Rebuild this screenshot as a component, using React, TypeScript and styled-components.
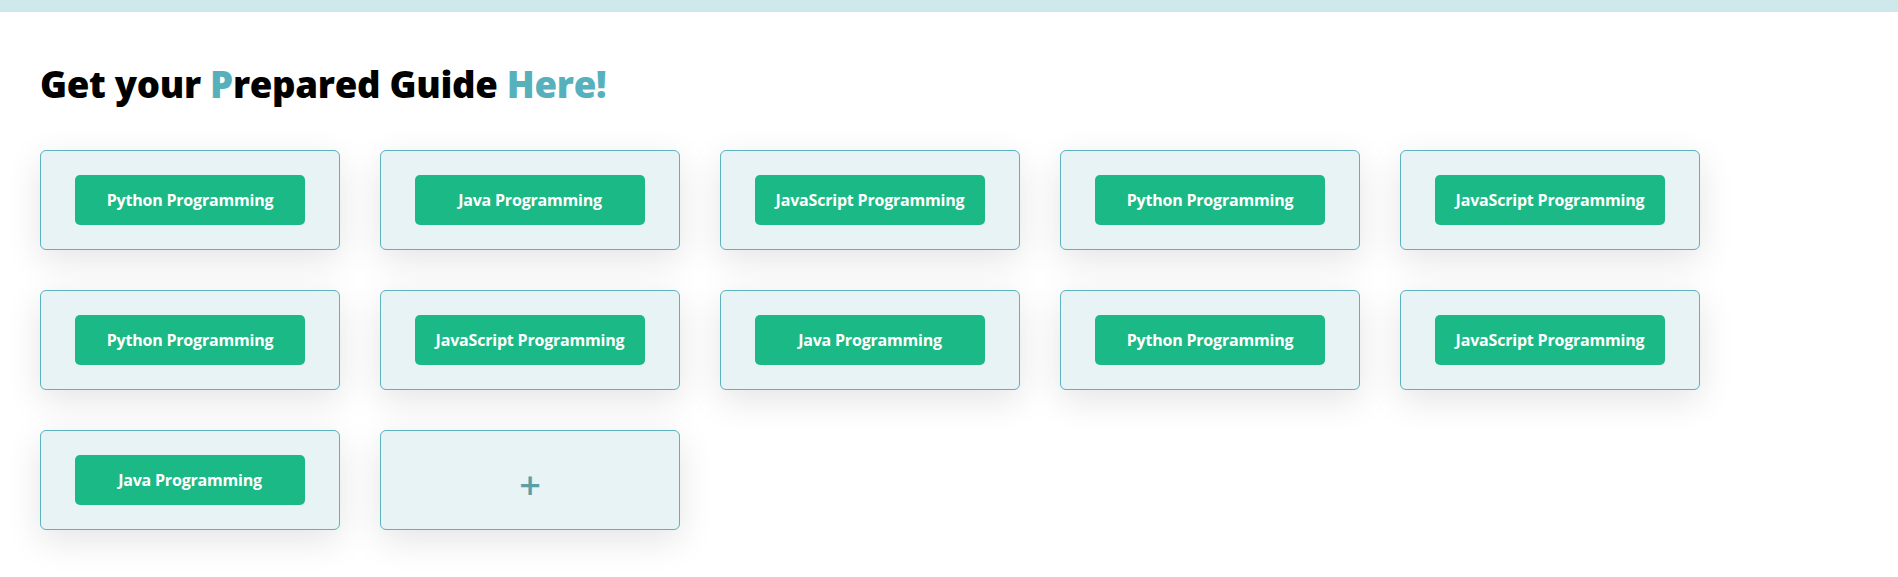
import React from "react";
import styled, { createGlobalStyle } from "styled-components";

const GlobalStyle = createGlobalStyle`
  html, body { margin: 0; padding: 0; background: #ffffff; }
  body { font-family: "Open Sans", "Noto Sans", sans-serif; }
`;

const TopBar = styled.div`
  height: 12px;
  background: #cfe8ec;
`;

const Main = styled.main`
  padding: 0 40px 60px;
`;

const Heading = styled.h1`
  margin: 0;
  padding-top: 44px;
  font-family: "Open Sans", sans-serif;
  font-weight: 800;
  font-size: 36.6px;
  line-height: 56px;
  color: #000;
  letter-spacing: -0.3px;
`;

const Accent = styled.span`
  color: #57b1bd;
`;

const Grid = styled.div`
  display: grid;
  grid-template-columns: repeat(5, 300px);
  gap: 40px;
  margin-top: 38px;
`;

const Card = styled.div`
  box-sizing: border-box;
  width: 300px;
  height: 100px;
  display: flex;
  align-items: center;
  justify-content: center;
  background: #e8f3f5;
  border: 1px solid #5cb2bf;
  border-radius: 6px;
  box-shadow: 0 10px 36px rgba(0, 0, 0, 0.11);
`;

const GuideButton = styled.button`
  width: 230px;
  height: 50px;
  border: none;
  border-radius: 5px;
  background: #1bb985;
  color: #ffffff;
  font-family: "Open Sans", sans-serif;
  font-weight: 700;
  font-size: 16px;
  letter-spacing: -0.2px;
  cursor: pointer;
`;

const AddCard = styled(Card)`
  cursor: pointer;
`;

const Plus = styled.span`
  font-family: "Open Sans", sans-serif;
  font-weight: 600;
  font-size: 38px;
  line-height: 1;
  color: #5b9ea8;
  margin-top: 8px;
`;

const guides = [
  "Python Programming",
  "Java Programming",
  "JavaScript Programming",
  "Python Programming",
  "JavaScript Programming",
  "Python Programming",
  "JavaScript Programming",
  "Java Programming",
  "Python Programming",
  "JavaScript Programming",
  "Java Programming",
];

export default function App() {
  return (
    <>
      <GlobalStyle />
      <TopBar />
      <Main>
        <Heading>
          Get your <Accent>P</Accent>repared Guide <Accent>Here!</Accent>
        </Heading>
        <Grid>
          {guides.map((g, i) => (
            <Card key={i}>
              <GuideButton>{g}</GuideButton>
            </Card>
          ))}
          <AddCard>
            <Plus>+</Plus>
          </AddCard>
        </Grid>
      </Main>
    </>
  );
}
